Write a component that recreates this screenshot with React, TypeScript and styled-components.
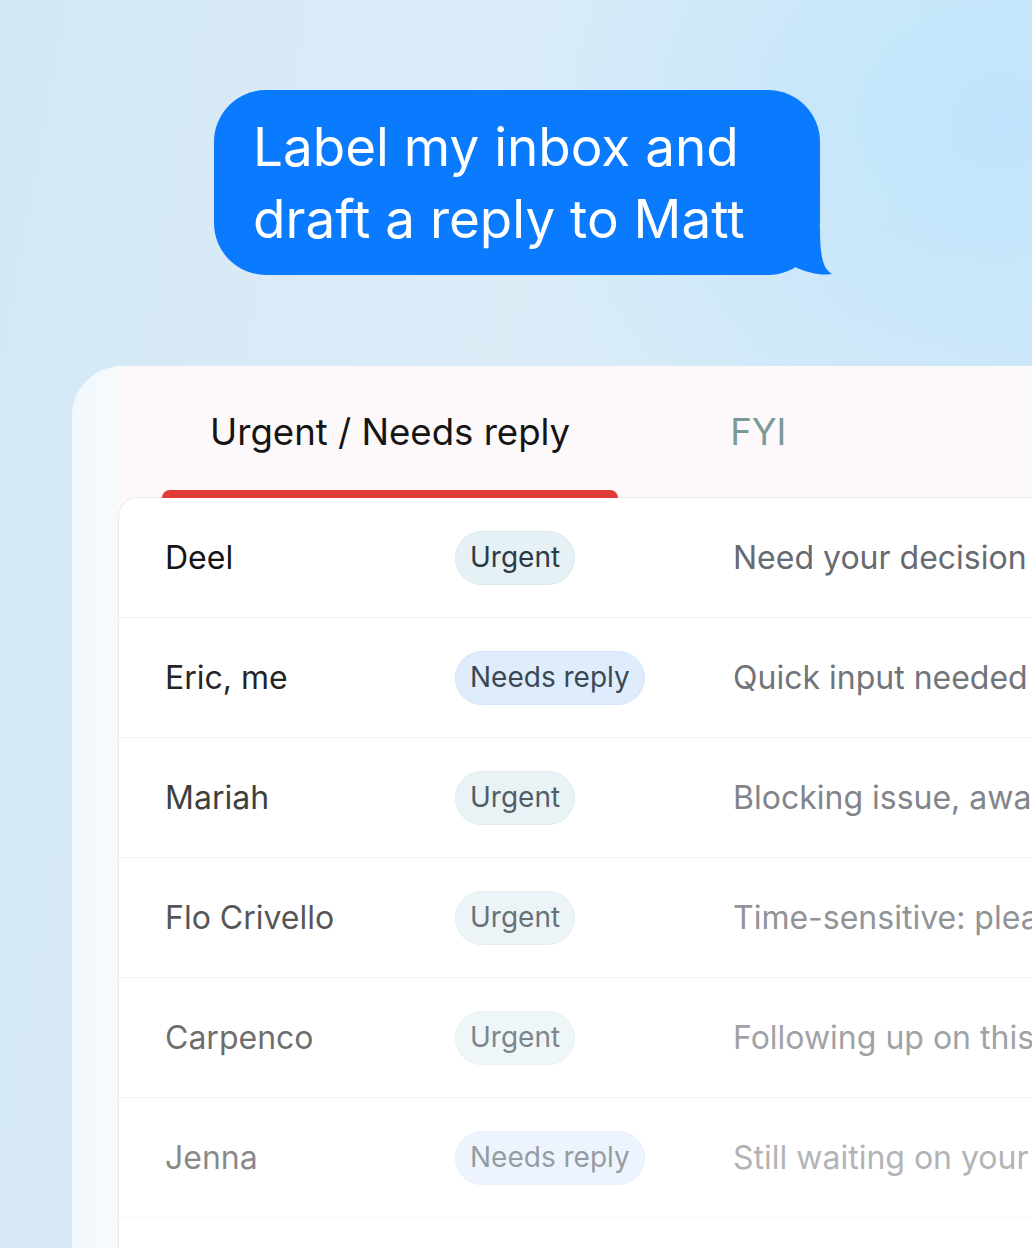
import * as React from 'react';
import styled, { createGlobalStyle, css } from 'styled-components';

type Label = 'urgent' | 'reply';

interface Thread {
  from: string;
  label: Label;
  preview: string;
}

const threads: Thread[] = [
  { from: 'Deel', label: 'urgent', preview: 'Need your decision on the contract terms' },
  { from: 'Eric, me', label: 'reply', preview: 'Quick input needed before Friday' },
  { from: 'Mariah', label: 'urgent', preview: 'Blocking issue, awaiting your sign-off' },
  { from: 'Flo Crivello', label: 'urgent', preview: 'Time-sensitive: please review today' },
  { from: 'Carpenco', label: 'urgent', preview: 'Following up on this invoice' },
  { from: 'Jenna', label: 'reply', preview: 'Still waiting on your answer' },
];

// rows fade out further down the list
const rowFade = [1, 0.93, 0.82, 0.72, 0.62, 0.5];

const GlobalStyle = createGlobalStyle`
  html, body {
    margin: 0;
    padding: 0;
  }
  body {
    font-family: Inter, "Noto Sans", "Liberation Sans", sans-serif;
    -webkit-font-smoothing: antialiased;
  }
`;

const App: React.FC = () => {
  return (
    <>
      <GlobalStyle />
      <Page>
        <BubbleRow>
          <Bubble>
            Label my inbox and
            <br />
            draft a reply to Matt
            <Tail viewBox="0 0 46 48" aria-hidden>
              <path d="M0 0 L32 0 C32 26 34 40 44 46 C34 48 20 45 7 39 L0 30 Z" fill="#0a7aff" />
            </Tail>
          </Bubble>
        </BubbleRow>

        <Card>
          <Header>
            <Tab active>Urgent / Needs reply</Tab>
            <Tab>FYI</Tab>
          </Header>
          <List>
            {threads.map((t, i) => (
              <Row key={t.from} style={{ opacity: rowFade[i] }}>
                <Sender>{t.from}</Sender>
                <BadgeCell>
                  <Badge kind={t.label}>{t.label === 'urgent' ? 'Urgent' : 'Needs reply'}</Badge>
                </BadgeCell>
                <Preview>{t.preview}</Preview>
              </Row>
            ))}
            <Row style={{ opacity: 0.4 }} />
          </List>
        </Card>
      </Page>
    </>
  );
};

const Page = styled.div`
  width: 1032px;
  height: 1248px;
  overflow: hidden;
  display: flex;
  flex-direction: column;
  background:
    radial-gradient(ellipse 520px 420px at 1000px 120px, rgba(190, 228, 252, 0.9), rgba(190, 228, 252, 0) 100%),
    linear-gradient(100deg, #d3e8f5 0%, #dbecf7 45%, #d2e9f8 100%);
`;

const BubbleRow = styled.div`
  padding: 90px 0 0 214px;
`;

const Bubble = styled.div`
  position: relative;
  display: inline-block;
  box-sizing: border-box;
  width: 606px;
  height: 185px;
  padding: 21px 0 0 39px;
  border-radius: 52px;
  background: #0a7aff;
  color: #fff;
  font-size: 53px;
  font-weight: 400;
  line-height: 72px;
`;

const Tail = styled.svg`
  position: absolute;
  right: -14px;
  bottom: -1px;
  width: 46px;
  height: 48px;
`;

const Card = styled.div`
  margin: 91px 0 0 72px;
  width: 1000px;
  flex: 1;
  display: flex;
  flex-direction: column;
  padding-left: 46px;
  border-top-left-radius: 50px;
  background: linear-gradient(90deg, #f1f8fd 0px, #f7fafc 46px, #fdf9fa 46px);
`;

const Header = styled.div`
  display: flex;
  gap: 64px;
  padding-left: 44px;
`;

const Tab = styled.div<{ active?: boolean }>`
  position: relative;
  padding: 44px 48px 0;
  height: 132px;
  box-sizing: border-box;
  font-size: 36.6px;
  line-height: 44px;
  color: #7b9999;

  ${p =>
    p.active &&
    css`
      color: #151515;
      &::after {
        content: '';
        position: absolute;
        left: 0;
        right: 0;
        bottom: 0;
        height: 8px;
        border-radius: 8px 8px 0 0;
        background: #e03b37;
      }
    `}
`;

const List = styled.div`
  flex: 1;
  background: #fff;
  border-top: 1px solid #ececee;
  border-left: 1px solid #ececee;
  border-top-left-radius: 20px;
  margin-top: -1px;
`;

const Row = styled.div`
  display: grid;
  grid-template-columns: 290px 278px 1fr;
  align-items: center;
  height: 120px;
  box-sizing: border-box;
  padding-left: 46px;
  border-bottom: 1px solid #eef0f2;
  white-space: nowrap;
  overflow: hidden;
`;

const Sender = styled.div`
  font-size: 32px;
  color: #141414;
`;

const BadgeCell = styled.div`
  display: flex;
`;

const Badge = styled.span<{ kind: Label }>`
  display: inline-flex;
  align-items: center;
  height: 54px;
  padding: 0 14px 2px;
  box-sizing: border-box;
  border-radius: 27px;
  font-size: 28px;
  color: #2d3b46;
  background: ${p => (p.kind === 'urgent' ? '#e5f1f4' : '#dcebfc')};
  border: 1px solid ${p => (p.kind === 'urgent' ? '#d9e9ed' : '#d0e2f8')};
`;

const Preview = styled.div`
  font-size: 32px;
  color: #676a70;
`;

export default App;
